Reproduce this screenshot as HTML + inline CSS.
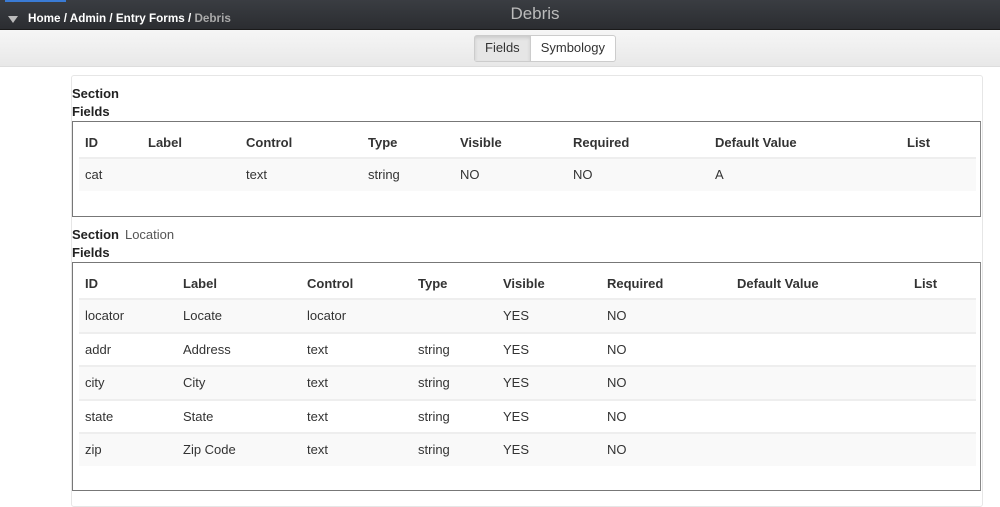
<!DOCTYPE html>
<html><head><style>
body{margin:0;width:1000px;height:494px;overflow:hidden;background:#fff;font-family:"Liberation Sans",Arial,sans-serif;color:#333;font-size:13px;position:relative}
.hdr{position:absolute;left:0;top:0;width:1000px;height:29px;background:linear-gradient(#3a3d42,#2b2d31);border-bottom:1px solid #1a1a1a}
.blue{position:absolute;left:5px;top:0;width:61px;height:2px;background:#3a7bd5}
.crumb{position:absolute;left:28px;top:12px;font-size:11.7px;font-weight:bold;color:#fff}
.crumb span{color:#aaa}
.tri{position:absolute;left:8px;top:16px;width:0;height:0;border-left:5px solid transparent;border-right:5px solid transparent;border-top:7px solid #bbb}
.title{position:absolute;left:0;width:1000px;top:4px;text-align:center;font-size:17px;color:#bbb;padding-left:70px;box-sizing:border-box}
.bar{position:absolute;left:0;top:30px;width:1000px;height:36px;background:linear-gradient(#f6f6f6,#e8e8e8);border-bottom:1px solid #ddd}
.btns{position:absolute;left:474px;top:35px;height:25px;border:1px solid #ccc;border-radius:3px;display:flex;background:#fff;font-size:13px}
.btns div{padding:4px 10px 0}
.btns .a{background:#e6e6e6;box-shadow:inset 0 2px 3px rgba(0,0,0,.12);border-right:1px solid #ccc}
.card{position:absolute;left:71px;top:75px;width:910px;height:430px;border:1px solid #e6e6e6;border-radius:3px}
.lbl{position:absolute;left:72px;font-weight:bold;font-size:13px;color:#222}
.lbl span{font-weight:normal;color:#555;margin-left:6px}
.box{position:absolute;left:72px;width:907px;border:1px solid #777;border-right-color:#888}
table{position:absolute;left:6px;top:5px;border-collapse:collapse;table-layout:fixed}
td,th{padding:0 6px;height:31.5px;text-align:left;white-space:nowrap}
th{font-weight:bold;color:#333;height:30px}
tr.s td{background:#f9f9f9}
tr+tr td{border-top:2px solid #eee}
</style></head><body>
<div class="hdr"><div class="blue"></div><div class="tri"></div>
<div class="crumb">Home / Admin / Entry Forms / <span>Debris</span></div>
<div class="title">Debris</div></div>
<div class="bar"></div>
<div class="btns"><div class="a">Fields</div><div>Symbology</div></div>
<div class="card"></div>
<div class="lbl" style="top:86px">Section</div>
<div class="lbl" style="top:104px">Fields</div>
<div class="box" style="top:121px;height:94px">
<table style="width:897px"><colgroup><col style="width:63px"><col style="width:98px"><col style="width:122px"><col style="width:92px"><col style="width:113px"><col style="width:142px"><col style="width:192px"><col style="width:75px"></colgroup>
<tr><th>ID</th><th>Label</th><th>Control</th><th>Type</th><th>Visible</th><th>Required</th><th>Default Value</th><th>List</th></tr>
<tr class="s"><td>cat</td><td></td><td>text</td><td>string</td><td>NO</td><td>NO</td><td>A</td><td></td></tr>
</table></div>
<div class="lbl" style="top:227px">Section<span>Location</span></div>
<div class="lbl" style="top:245px">Fields</div>
<div class="box" style="top:262px;height:227px">
<table style="width:897px"><colgroup><col style="width:98px"><col style="width:124px"><col style="width:111px"><col style="width:85px"><col style="width:104px"><col style="width:130px"><col style="width:177px"><col style="width:68px"></colgroup>
<tr><th>ID</th><th>Label</th><th>Control</th><th>Type</th><th>Visible</th><th>Required</th><th>Default Value</th><th>List</th></tr>
<tr class="s"><td>locator</td><td>Locate</td><td>locator</td><td></td><td>YES</td><td>NO</td><td></td><td></td></tr>
<tr><td>addr</td><td>Address</td><td>text</td><td>string</td><td>YES</td><td>NO</td><td></td><td></td></tr>
<tr class="s"><td>city</td><td>City</td><td>text</td><td>string</td><td>YES</td><td>NO</td><td></td><td></td></tr>
<tr><td>state</td><td>State</td><td>text</td><td>string</td><td>YES</td><td>NO</td><td></td><td></td></tr>
<tr class="s"><td>zip</td><td>Zip Code</td><td>text</td><td>string</td><td>YES</td><td>NO</td><td></td><td></td></tr>
</table></div>
</body></html>
